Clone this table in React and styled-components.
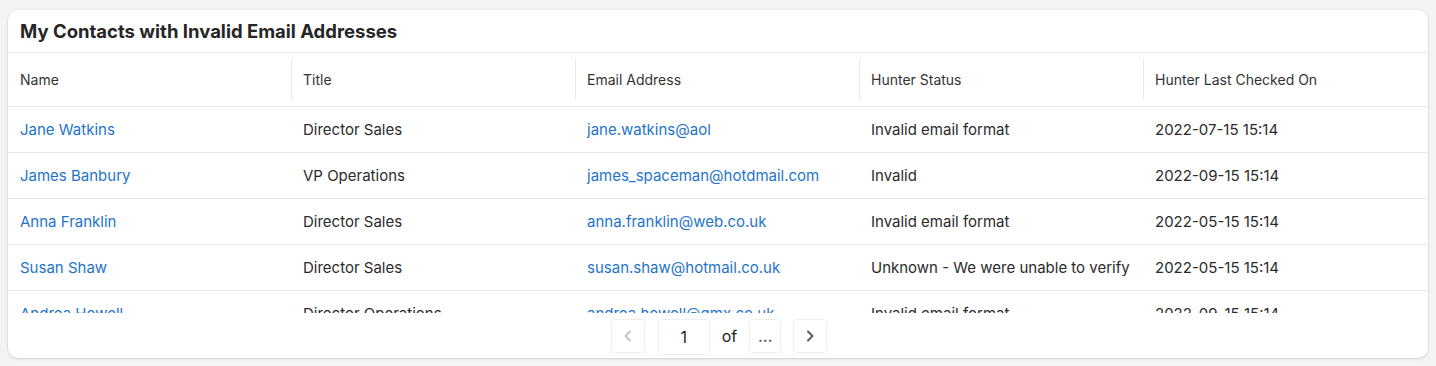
import React from "react";
import styled, { createGlobalStyle } from "styled-components";

const contacts = [
  { name: "Jane Watkins", title: "Director Sales", email: "jane.watkins@aol", status: "Invalid email format", checked: "2022-07-15 15:14" },
  { name: "James Banbury", title: "VP Operations", email: "james_spaceman@hotdmail.com", status: "Invalid", checked: "2022-09-15 15:14" },
  { name: "Anna Franklin", title: "Director Sales", email: "anna.franklin@web.co.uk", status: "Invalid email format", checked: "2022-05-15 15:14" },
  { name: "Susan Shaw", title: "Director Sales", email: "susan.shaw@hotmail.co.uk", status: "Unknown - We were unable to verify", checked: "2022-05-15 15:14" },
  { name: "Andrea Howell", title: "Director Operations", email: "andrea.howell@gmx.co.uk", status: "Invalid email format", checked: "2022-09-15 15:14" },
];

const columns = ["Name", "Title", "Email Address", "Hunter Status", "Hunter Last Checked On"];

export default function App() {
  return (
    <>
      <GlobalStyle />
      <Page>
        <Card>
          <CardTitle>My Contacts with Invalid Email Addresses</CardTitle>
          <HeaderRow>
            {columns.map((c, i) => (
              <HeaderCell key={c} $divider={i > 0}>
                {c}
              </HeaderCell>
            ))}
          </HeaderRow>
          <Body>
            {contacts.map((c) => (
              <Row key={c.name}>
                <Cell>
                  <LinkText>{c.name}</LinkText>
                </Cell>
                <Cell>{c.title}</Cell>
                <Cell>
                  <LinkText>{c.email}</LinkText>
                </Cell>
                <Cell>{c.status}</Cell>
                <Cell>{c.checked}</Cell>
              </Row>
            ))}
          </Body>
          <Pager>
            <PageButton disabled>
              <Chevron dir="left" />
            </PageButton>
            <PageInput>1</PageInput>
            <Of>of</Of>
            <PageButton $narrow>...</PageButton>
            <PageButton>
              <Chevron dir="right" />
            </PageButton>
          </Pager>
        </Card>
      </Page>
    </>
  );
}

function Chevron({ dir }) {
  return (
    <svg width="14" height="14" viewBox="0 0 14 14" fill="none">
      <path
        d={dir === "left" ? "M9 2.5 4.5 7 9 11.5" : "M5 2.5 9.5 7 5 11.5"}
        stroke="currentColor"
        strokeWidth="2"
        strokeLinecap="round"
        strokeLinejoin="round"
      />
    </svg>
  );
}

const GlobalStyle = createGlobalStyle`
  body {
    margin: 0;
    background: #f3f4f6;
    font-family: Inter, "Noto Sans", sans-serif;
    color: #2b2b2b;
  }
`;

const Page = styled.div`
  padding: 10px 8px 8px 8px;
`;

const Card = styled.div`
  background: #fff;
  border-radius: 10px;
  box-shadow: 0 1px 3px rgba(0, 0, 0, 0.12), 0 0 0 1px rgba(0, 0, 0, 0.03);
  overflow: hidden;
  height: 348px;
  display: flex;
  flex-direction: column;
`;

const CardTitle = styled.div`
  height: 42px;
  display: flex;
  align-items: center;
  padding: 0 12px;
  font-size: 18.5px;
  font-weight: 700;
  color: #262626;
  border-bottom: 1px solid #e6e8eb;
`;

const HeaderRow = styled.div`
  display: grid;
  grid-template-columns: repeat(5, 1fr);
  height: 53px;
  border-bottom: 1px solid #e6e8eb;
`;

const HeaderCell = styled.div`
  display: flex;
  align-items: center;
  padding: 0 11px;
  font-size: 14px;
  color: #333;
  position: relative;
  &:first-child {
    padding-left: 12px;
  }
  &::before {
    content: "";
    display: ${(p) => (p.$divider ? "block" : "none")};
    position: absolute;
    left: -1px;
    top: 6px;
    bottom: 6px;
    width: 1px;
    background: #e8eaed;
  }
`;

const Body = styled.div`
  height: 206px;
  overflow: hidden;
`;

const Row = styled.div`
  display: grid;
  grid-template-columns: repeat(5, 1fr);
  height: 45px;
  border-bottom: 1px solid #e6e8eb;
`;

const Cell = styled.div`
  display: flex;
  align-items: center;
  padding: 0 11px;
  font-size: 15px;
  color: #2b2b2b;
  white-space: nowrap;
  overflow: hidden;
  &:first-child {
    padding-left: 12px;
  }
`;

const LinkText = styled.span`
  color: #1f74c9;
  cursor: pointer;
`;

const Pager = styled.div`
  flex: 1;
  display: flex;
  align-items: flex-start;
  justify-content: center;
  padding-top: 6px;
  padding-left: 2px;
  gap: 12px;
`;

const PageButton = styled.button`
  width: ${(p) => (p.$narrow ? "32px" : "34px")};
  height: 34px;
  border: 1px solid #eceef0;
  border-radius: 4px;
  background: #fff;
  display: flex;
  align-items: center;
  justify-content: center;
  font-family: inherit;
  font-size: 15px;
  font-weight: 600;
  color: ${(p) => (p.disabled ? "#c2c4c6" : "#5a5d61")};
  padding: 0;
  line-height: 1;
  &:first-child {
    margin-right: 1px;
  }
`;

const PageInput = styled.div`
  width: 50px;
  height: 34px;
  border: 1px solid #eceef0;
  border-radius: 4px;
  display: flex;
  align-items: center;
  justify-content: center;
  font-size: 16px;
  color: #222;
`;

const Of = styled.span`
  height: 34px;
  display: flex;
  align-items: center;
  font-size: 16px;
  color: #222;
`;
